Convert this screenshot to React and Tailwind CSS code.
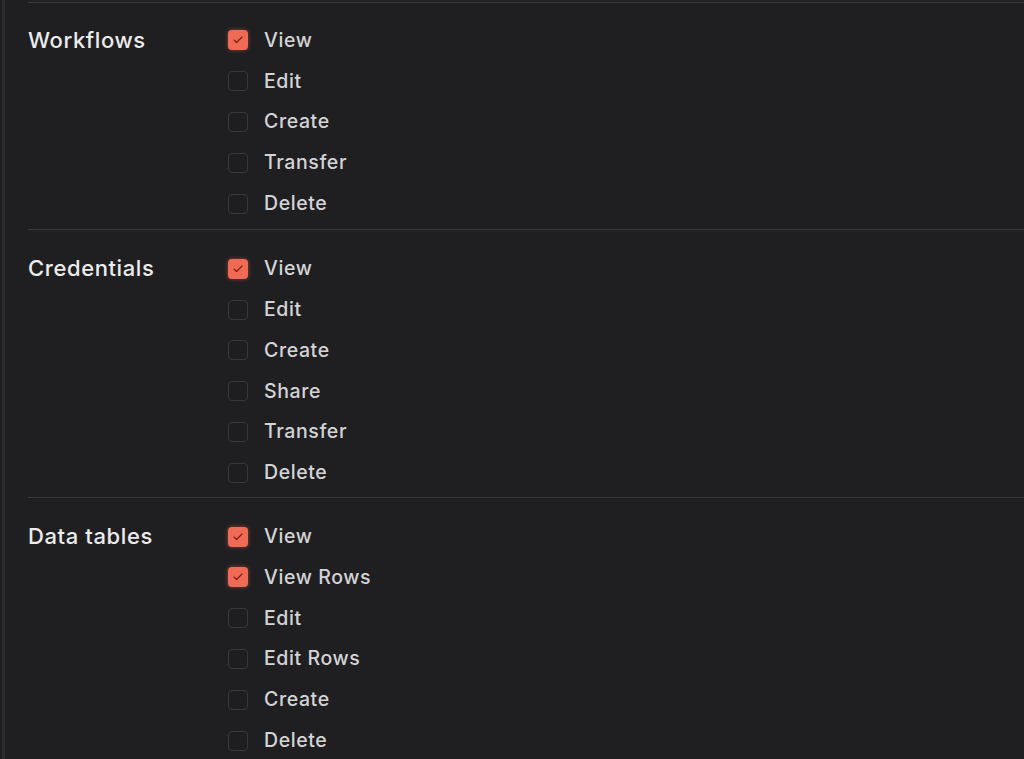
import { Check } from 'lucide-react';

const sections = [
    {
        name: 'Workflows',
        perms: [
            { label: 'View', on: true },
            { label: 'Edit' },
            { label: 'Create' },
            { label: 'Transfer' },
            { label: 'Delete' },
        ],
    },
    {
        name: 'Credentials',
        perms: [
            { label: 'View', on: true },
            { label: 'Edit' },
            { label: 'Create' },
            { label: 'Share' },
            { label: 'Transfer' },
            { label: 'Delete' },
        ],
    },
    {
        name: 'Data tables',
        perms: [
            { label: 'View', on: true },
            { label: 'View Rows', on: true },
            { label: 'Edit' },
            { label: 'Edit Rows' },
            { label: 'Create' },
            { label: 'Delete' },
        ],
    },
];

const Box = ({ on }) =>
    on ? (
        <div className="w-5 h-5 rounded-[4px] bg-[#ef6b55] shadow-[0_0_4px_rgba(239,107,85,0.5)] flex items-center justify-center">
            <Check size={12} strokeWidth={2.2} className="text-[#7a1a10]" />
        </div>
    ) : (
        <div className="w-5 h-5 rounded-[4px] border border-[#38383b] bg-[#1e1e20]" />
    );

export default function App() {
    return (
        <div
            className="w-[1024px] h-[759px] overflow-hidden bg-[#1f1f21] flex"
            style={{ fontFamily: 'Inter, "Noto Sans", sans-serif' }}
        >
            <div className="w-[3px] ml-[2px] bg-[#2c2c2e] shrink-0" />
            <div className="flex-1 pl-[23px] pt-[2px]">
                {sections.map((s, i) => (
                    <div
                        key={s.name}
                        className={`border-t border-[#3a3a3c] flex ${i === 0 ? 'pt-[17px] pb-[5px]' : 'pt-[18.5px] pb-[3.5px]'}`}
                    >
                        <div className="w-[200px] shrink-0 h-[40.8px] flex items-center text-[22px] font-medium text-[#ececec] tracking-[0.6px]">
                            {s.name}
                        </div>
                        <div className="flex flex-col">
                            {s.perms.map((p) => (
                                <div key={p.label} className="h-[40.8px] flex items-center gap-4">
                                    <Box on={p.on} />
                                    <span className="text-[19.5px] font-medium text-[#d4d4d6] tracking-[0.6px]">
                                        {p.label}
                                    </span>
                                </div>
                            ))}
                        </div>
                    </div>
                ))}
            </div>
        </div>
    );
}
